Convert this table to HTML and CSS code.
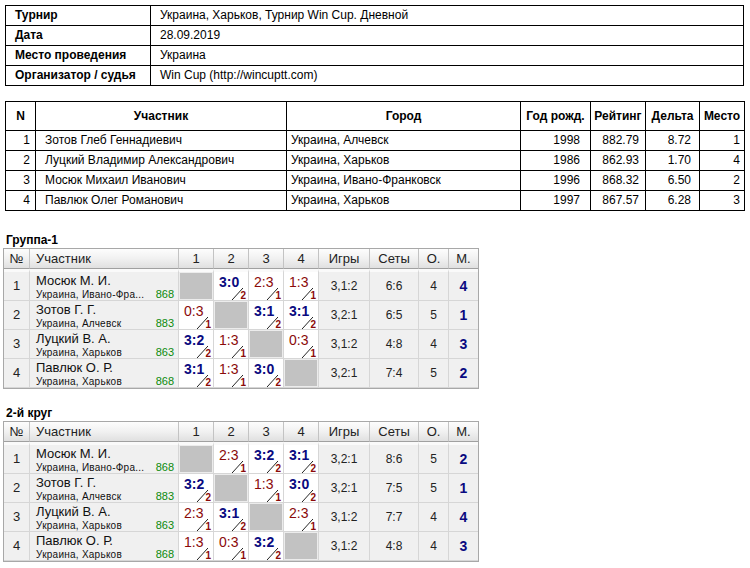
FILE: index.html
```html
<!DOCTYPE html>
<html lang="ru">
<head>
<meta charset="utf-8">
<title>Турнир Win Cup</title>
<link rel="stylesheet" href="styles.css">
</head>
<body>
<table class="info">
  <colgroup><col class="c-label"><col></colgroup>
  <tr><th>Турнир</th><td>Украина, Харьков, Турнир Win Cup. Дневной</td></tr>
  <tr><th>Дата</th><td>28.09.2019</td></tr>
  <tr><th>Место проведения</th><td>Украина</td></tr>
  <tr><th>Организатор / судья</th><td>Win Cup (http://wincuptt.com)</td></tr>
</table>

<table class="players">
  <colgroup>
    <col class="p-n"><col class="p-name"><col class="p-city"><col class="p-year"><col class="p-rt"><col class="p-dl"><col class="p-pl">
  </colgroup>
  <tr class="hd"><th>N</th><th>Участник</th><th>Город</th><th>Год рожд.</th><th>Рейтинг</th><th>Дельта</th><th>Место</th></tr>
  <tr><td class="num">1</td><td class="nm">Зотов Глеб Геннадиевич</td><td class="ct">Украина, Алчевск</td><td class="yr">1998</td><td class="rt">882.79</td><td class="dl">8.72</td><td class="pl">1</td></tr>
  <tr><td class="num">2</td><td class="nm">Луцкий Владимир Александрович</td><td class="ct">Украина, Харьков</td><td class="yr">1986</td><td class="rt">862.93</td><td class="dl">1.70</td><td class="pl">4</td></tr>
  <tr><td class="num">3</td><td class="nm">Мосюк Михаил Иванович</td><td class="ct">Украина, Ивано-Франковск</td><td class="yr">1996</td><td class="rt">868.32</td><td class="dl">6.50</td><td class="pl">2</td></tr>
  <tr><td class="num">4</td><td class="nm">Павлюк Олег Романович</td><td class="ct">Украина, Харьков</td><td class="yr">1997</td><td class="rt">867.57</td><td class="dl">6.28</td><td class="pl">3</td></tr>
</table>

<h2 class="gtitle first">Группа-1</h2>
<table class="grid">
  <colgroup>
    <col class="g-n"><col class="g-name"><col class="g-s"><col class="g-s"><col class="g-s"><col class="g-s"><col class="g-games"><col class="g-sets"><col class="g-o"><col class="g-m">
  </colgroup>
  <thead>
    <tr><th>№</th><th class="left">Участник</th><th>1</th><th>2</th><th>3</th><th>4</th><th>Игры</th><th>Сеты</th><th>О.</th><th>М.</th></tr>
  </thead>
  <tbody>
    <tr>
      <td class="n">1</td>
      <td class="who"><div class="pn">Мосюк М. И.</div><div class="pc"><span class="town">Украина, Ивано-Фра...</span><span class="pr">868</span></div></td>
      <td class="diag"></td>
      <td class="sc"><div class="s w">3:0</div><div class="sub"><span class="sl"></span><b>2</b></div></td>
      <td class="sc"><div class="s l">2:3</div><div class="sub"><span class="sl"></span><b>1</b></div></td>
      <td class="sc"><div class="s l">1:3</div><div class="sub"><span class="sl"></span><b>1</b></div></td>
      <td>3,1:2</td><td>6:6</td><td>4</td><td class="m">4</td>
    </tr>
    <tr>
      <td class="n">2</td>
      <td class="who"><div class="pn">Зотов Г. Г.</div><div class="pc"><span class="town">Украина, Алчевск</span><span class="pr">883</span></div></td>
      <td class="sc"><div class="s l">0:3</div><div class="sub"><span class="sl"></span><b>1</b></div></td>
      <td class="diag"></td>
      <td class="sc"><div class="s w">3:1</div><div class="sub"><span class="sl"></span><b>2</b></div></td>
      <td class="sc"><div class="s w">3:1</div><div class="sub"><span class="sl"></span><b>2</b></div></td>
      <td>3,2:1</td><td>6:5</td><td>5</td><td class="m">1</td>
    </tr>
    <tr>
      <td class="n">3</td>
      <td class="who"><div class="pn">Луцкий В. А.</div><div class="pc"><span class="town">Украина, Харьков</span><span class="pr">863</span></div></td>
      <td class="sc"><div class="s w">3:2</div><div class="sub"><span class="sl"></span><b>2</b></div></td>
      <td class="sc"><div class="s l">1:3</div><div class="sub"><span class="sl"></span><b>1</b></div></td>
      <td class="diag"></td>
      <td class="sc"><div class="s l">0:3</div><div class="sub"><span class="sl"></span><b>1</b></div></td>
      <td>3,1:2</td><td>4:8</td><td>4</td><td class="m">3</td>
    </tr>
    <tr>
      <td class="n">4</td>
      <td class="who"><div class="pn">Павлюк О. Р.</div><div class="pc"><span class="town">Украина, Харьков</span><span class="pr">868</span></div></td>
      <td class="sc"><div class="s w">3:1</div><div class="sub"><span class="sl"></span><b>2</b></div></td>
      <td class="sc"><div class="s l">1:3</div><div class="sub"><span class="sl"></span><b>1</b></div></td>
      <td class="sc"><div class="s w">3:0</div><div class="sub"><span class="sl"></span><b>2</b></div></td>
      <td class="diag"></td>
      <td>3,2:1</td><td>7:4</td><td>5</td><td class="m">2</td>
    </tr>
  </tbody>
</table>

<h2 class="gtitle">2-й круг</h2>
<table class="grid">
  <colgroup>
    <col class="g-n"><col class="g-name"><col class="g-s"><col class="g-s"><col class="g-s"><col class="g-s"><col class="g-games"><col class="g-sets"><col class="g-o"><col class="g-m">
  </colgroup>
  <thead>
    <tr><th>№</th><th class="left">Участник</th><th>1</th><th>2</th><th>3</th><th>4</th><th>Игры</th><th>Сеты</th><th>О.</th><th>М.</th></tr>
  </thead>
  <tbody>
    <tr>
      <td class="n">1</td>
      <td class="who"><div class="pn">Мосюк М. И.</div><div class="pc"><span class="town">Украина, Ивано-Фра...</span><span class="pr">868</span></div></td>
      <td class="diag"></td>
      <td class="sc"><div class="s l">2:3</div><div class="sub"><span class="sl"></span><b>1</b></div></td>
      <td class="sc"><div class="s w">3:2</div><div class="sub"><span class="sl"></span><b>2</b></div></td>
      <td class="sc"><div class="s w">3:1</div><div class="sub"><span class="sl"></span><b>2</b></div></td>
      <td>3,2:1</td><td>8:6</td><td>5</td><td class="m">2</td>
    </tr>
    <tr>
      <td class="n">2</td>
      <td class="who"><div class="pn">Зотов Г. Г.</div><div class="pc"><span class="town">Украина, Алчевск</span><span class="pr">883</span></div></td>
      <td class="sc"><div class="s w">3:2</div><div class="sub"><span class="sl"></span><b>2</b></div></td>
      <td class="diag"></td>
      <td class="sc"><div class="s l">1:3</div><div class="sub"><span class="sl"></span><b>1</b></div></td>
      <td class="sc"><div class="s w">3:0</div><div class="sub"><span class="sl"></span><b>2</b></div></td>
      <td>3,2:1</td><td>7:5</td><td>5</td><td class="m">1</td>
    </tr>
    <tr>
      <td class="n">3</td>
      <td class="who"><div class="pn">Луцкий В. А.</div><div class="pc"><span class="town">Украина, Харьков</span><span class="pr">863</span></div></td>
      <td class="sc"><div class="s l">2:3</div><div class="sub"><span class="sl"></span><b>1</b></div></td>
      <td class="sc"><div class="s w">3:1</div><div class="sub"><span class="sl"></span><b>2</b></div></td>
      <td class="diag"></td>
      <td class="sc"><div class="s l">2:3</div><div class="sub"><span class="sl"></span><b>1</b></div></td>
      <td>3,1:2</td><td>7:7</td><td>4</td><td class="m">4</td>
    </tr>
    <tr>
      <td class="n">4</td>
      <td class="who"><div class="pn">Павлюк О. Р.</div><div class="pc"><span class="town">Украина, Харьков</span><span class="pr">868</span></div></td>
      <td class="sc"><div class="s l">1:3</div><div class="sub"><span class="sl"></span><b>1</b></div></td>
      <td class="sc"><div class="s l">0:3</div><div class="sub"><span class="sl"></span><b>1</b></div></td>
      <td class="sc"><div class="s w">3:2</div><div class="sub"><span class="sl"></span><b>2</b></div></td>
      <td class="diag"></td>
      <td>3,1:2</td><td>4:8</td><td>4</td><td class="m">3</td>
    </tr>
  </tbody>
</table>
</body>
</html>
```
FILE: styles.css
```css
html, body {
  margin: 0;
  padding: 0;
  background: #fff;
}
body {
  padding: 5px 0 0 0;
  font-family: "Liberation Sans", Arial, sans-serif;
  font-size: 12px;
  color: #000;
}

/* ---------- tournament info ---------- */
.info {
  margin-left: 5px;
  width: 739px;
  border-collapse: collapse;
  table-layout: fixed;
}
.info .c-label { width: 145px; }
.info th, .info td {
  border: 1px solid #000;
  height: 19px;
  padding: 0 9px;
  text-align: left;
  line-height: 17px;
  white-space: nowrap;
}
.info th { font-weight: bold; }

/* ---------- players list ---------- */
.players {
  margin: 15px 0 0 5px;
  width: 739px;
  border-collapse: collapse;
  table-layout: fixed;
}
.players .p-n { width: 30px; }
.players .p-name { width: 251px; }
.players .p-city { width: 234px; }
.players .p-year { width: 70px; }
.players .p-rt { width: 55px; }
.players .p-dl { width: 54px; }
.players .p-pl { width: 45px; }
.players th, .players td {
  border: 1px solid #000;
  height: 19px;
  line-height: 17px;
  padding: 0 4px;
  white-space: nowrap;
}
.players .hd th {
  height: 28px;
  font-weight: bold;
  text-align: center;
  padding: 0 2px;
}
.players td.num { text-align: right; padding-right: 5px; }
.players td.nm { padding-left: 9px; }
.players td.ct { padding-left: 4px; }
.players td.yr { text-align: right; padding-right: 10px; }
.players td.rt { text-align: right; padding-right: 6px; }
.players td.dl { text-align: right; padding-right: 8px; }
.players td.pl { text-align: right; padding-right: 4px; }

/* ---------- group grids ---------- */
.gtitle {
  margin: 22px 0 0 6px;
  font-size: 12px;
  line-height: 15px;
  font-weight: bold;
}
.gtitle:not(.first) { margin-top: 17px; }

.grid {
  margin-left: 3px;
  width: 476px;
  border-collapse: separate;
  border-spacing: 0;
  table-layout: fixed;
  border: 1px solid #a8a8a8;
  color: #111;
}
.grid .g-n { width: 25px; }
.grid .g-name { width: 149px; }
.grid .g-s { width: 35px; }
.grid .g-games { width: 51px; }
.grid .g-sets { width: 49px; }
.grid .g-o { width: 30px; }
.grid .g-m { width: 30px; }

.grid thead th {
  padding: 0;
  font-weight: normal;
  font-size: 13px;
  line-height: 19px;
  color: #222;
  text-align: center;
  background: linear-gradient(#fdfdfd, #f1f1f1 50%, #e0e0e0);
  border-left: 1px solid #c3c3c3;
  border-bottom: 1px solid #a0a0a0;
}
.grid thead th:first-child { border-left: none; }
.grid thead th.left { text-align: left; padding-left: 6px; }

.grid tbody td {
  height: 1px;
  padding: 0;
  background: #f0f0f0;
  border-left: 1px solid #d6d6d6;
  border-bottom: 1px solid #d6d6d6;
  text-align: center;
  font-size: 12px;
  line-height: 14px;
  color: #222;
}
.grid tbody tr:first-child td { border-top: 3px solid #fafafa; }
.grid tbody td:first-child { border-left: none; }

.grid td.n { font-size: 13px; color: #222; }

.grid td.who {
  text-align: left;
  padding: 0 4px 0 6px;
  vertical-align: top;
}
.pn {
  font-size: 13px;
  line-height: 15px;
  height: 15px;
  padding-top: 1px;
  color: #111;
  white-space: nowrap;
}
.pc {
  display: flex;
  align-items: baseline;
  justify-content: space-between;
  height: 12px;
  line-height: 12px;
}
.town {
  font-size: 10px;
  letter-spacing: 0.25px;
  color: #111;
  white-space: nowrap;
}
.pr {
  font-size: 11px;
  color: #0a8a0a;
}

.grid td.diag {
  background: #c2c2c2;
  box-shadow: inset 0 0 0 1px #ececec;
}
.grid td.sc {
  background: #fff;
  vertical-align: top;
  text-align: left;
}
.s {
  font-size: 14px;
  line-height: 14px;
  padding: 3px 0 0 5px;
  height: 13px;
}
.s.w { font-weight: bold; color: #0a0a80; }
.s.l { color: #8a0a0a; }
.sub {
  display: flex;
  justify-content: flex-end;
  align-items: flex-end;
  padding-right: 2px;
  height: 12px;
}
.sl {
  width: 11px;
  height: 12px;
  margin-right: -3px;
  background: linear-gradient(to bottom right, transparent calc(50% - 0.7px), #1a1a1a 50%, transparent calc(50% + 0.7px));
}
.sub b {
  font-size: 10px;
  line-height: 9px;
  font-weight: bold;
  color: #8a0a0a;
}
.grid td.m {
  font-weight: bold;
  font-size: 14px;
  color: #0a0a80;
}
```
